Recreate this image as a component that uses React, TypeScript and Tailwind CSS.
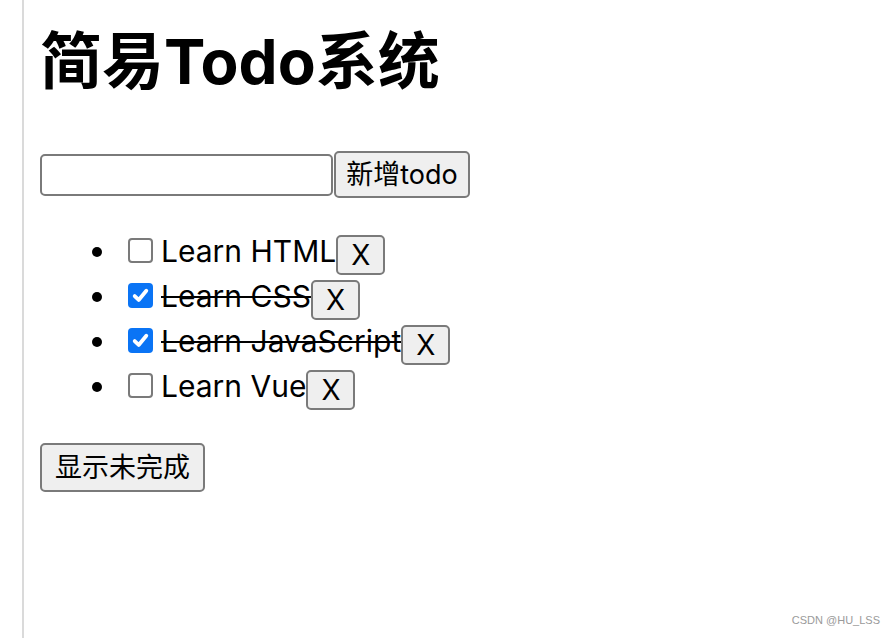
import React from "react";

const font = { fontFamily: 'Inter, "Noto Sans CJK SC", sans-serif' };

function Box({ checked }: { checked: boolean }) {
  if (checked) {
    return (
      <span className="w-[25px] h-[25px] rounded-[4px] bg-[#0a74f5] flex items-center justify-center shrink-0">
        <svg width="19" height="19" viewBox="0 0 18 18">
          <path d="M3.5 9.5 L7.3 13.2 L14.5 4.5" stroke="white" strokeWidth="3.6" fill="none" strokeLinecap="round" strokeLinejoin="round" />
        </svg>
      </span>
    );
  }
  return <span className="block w-[25px] h-[25px] rounded-[4px] border-[2px] border-[#7a7a7a] bg-white shrink-0" />;
}

const items = [
  { t: "Learn HTML", d: false },
  { t: "Learn CSS", d: true },
  { t: "Learn JavaScript", d: true },
  { t: "Learn Vue", d: false },
];

export default function App() {
  return (
    <div className="relative flex min-h-[638px] bg-white text-black" style={font}>
      <div className="w-[22px] shrink-0" />
      <div className="w-[2px] shrink-0 bg-[#dadada]" />
      <div className="flex flex-col pl-[16px] pt-[30px]">
        <h1 className="text-[62px] leading-[64px] h-[64px] font-bold whitespace-nowrap">简易Todo系统</h1>
        <div className="flex items-center mt-[57px] h-[47px]">
          <div className="w-[293px] h-[42px] border-[2px] border-[#7a7a7a] rounded-[5px] bg-white" />
          <button className="ml-[1px] h-[47px] w-[136px] border-[2px] border-[#7a7a7a] rounded-[5px] bg-[#efefef] text-[27px] leading-none">新增todo</button>
        </div>
        <ul className="mt-[31px] flex flex-col">
          {items.map((it) => (
            <li key={it.t} className="h-[45px] flex items-center">
              <span className="ml-[52px] w-[10px] h-[10px] rounded-full bg-black shrink-0" />
              <span className="ml-[26px] -mt-[3px] flex"><Box checked={it.d} /></span>
              <span className={"ml-[8px] -mt-[2px] text-[30px] leading-none whitespace-nowrap " + (it.d ? "line-through decoration-[2px]" : "")}>{it.t}</span>
              <button className="mt-[6px] h-[40px] w-[49px] border-[2px] border-[#7a7a7a] rounded-[5px] bg-[#efefef] text-[28px] leading-none">X</button>
            </li>
          ))}
        </ul>
        <div className="mt-[34px]">
          <button className="h-[49px] w-[165px] border-[2px] border-[#7a7a7a] rounded-[5px] bg-[#efefef] text-[27px] leading-none">显示未完成</button>
        </div>
      </div>
      <div className="absolute right-[14px] bottom-[10px] text-[11px] text-[#9a9a9a]" style={{ fontFamily: '"Liberation Sans", sans-serif' }}>CSDN @HU_LSS</div>
    </div>
  );
}
